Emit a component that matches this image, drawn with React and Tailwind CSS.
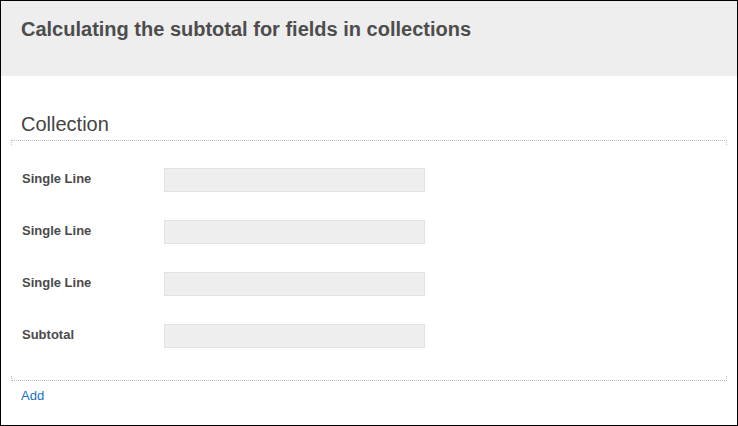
import React from 'react';

const fields = ['Single Line', 'Single Line', 'Single Line', 'Subtotal'];

const App = () => {
    return (
        <div className="w-[738px] h-[426px] border border-black bg-white font-['Liberation_Sans',Arial,sans-serif] overflow-hidden">
            {/* Header */}
            <div className="h-[75px] bg-[#eeeeee] px-[20px] pt-[17px]">
                <h1 className="text-[20px] leading-[23px] font-bold text-[#4d4d4d]">
                    Calculating the subtotal for fields in collections
                </h1>
            </div>

            {/* Collection */}
            <div className="px-[10px]">
                <h2 className="pl-[10px] pt-[37px] text-[20px] leading-[23px] text-[#444444]">Collection</h2>
                <div className="mt-[4px] h-[5px] border-t border-x border-dotted border-[#bbbbbb]" />

                <div className="pt-[9px] pb-[14px]">
                    {fields.map((label, i) => (
                        <div key={i} className="flex items-center h-[52px]">
                            <div className="w-[153px] pl-[11px] pb-[3px] text-[13px] leading-[15px] font-bold text-[#4a4a4a]">{label}</div>
                            <div className="w-[261px] h-[24px] bg-[#eeeeee] border border-[#e2e2e2]" />
                        </div>
                    ))}
                </div>

                <div className="h-[5px] border-b border-x border-dotted border-[#bbbbbb]" />
                <a href="#" className="block pl-[10px] mt-[8px] text-[13px] leading-[14px] text-[#1a6fc9]">Add</a>
            </div>
        </div>
    );
};

export default App;
